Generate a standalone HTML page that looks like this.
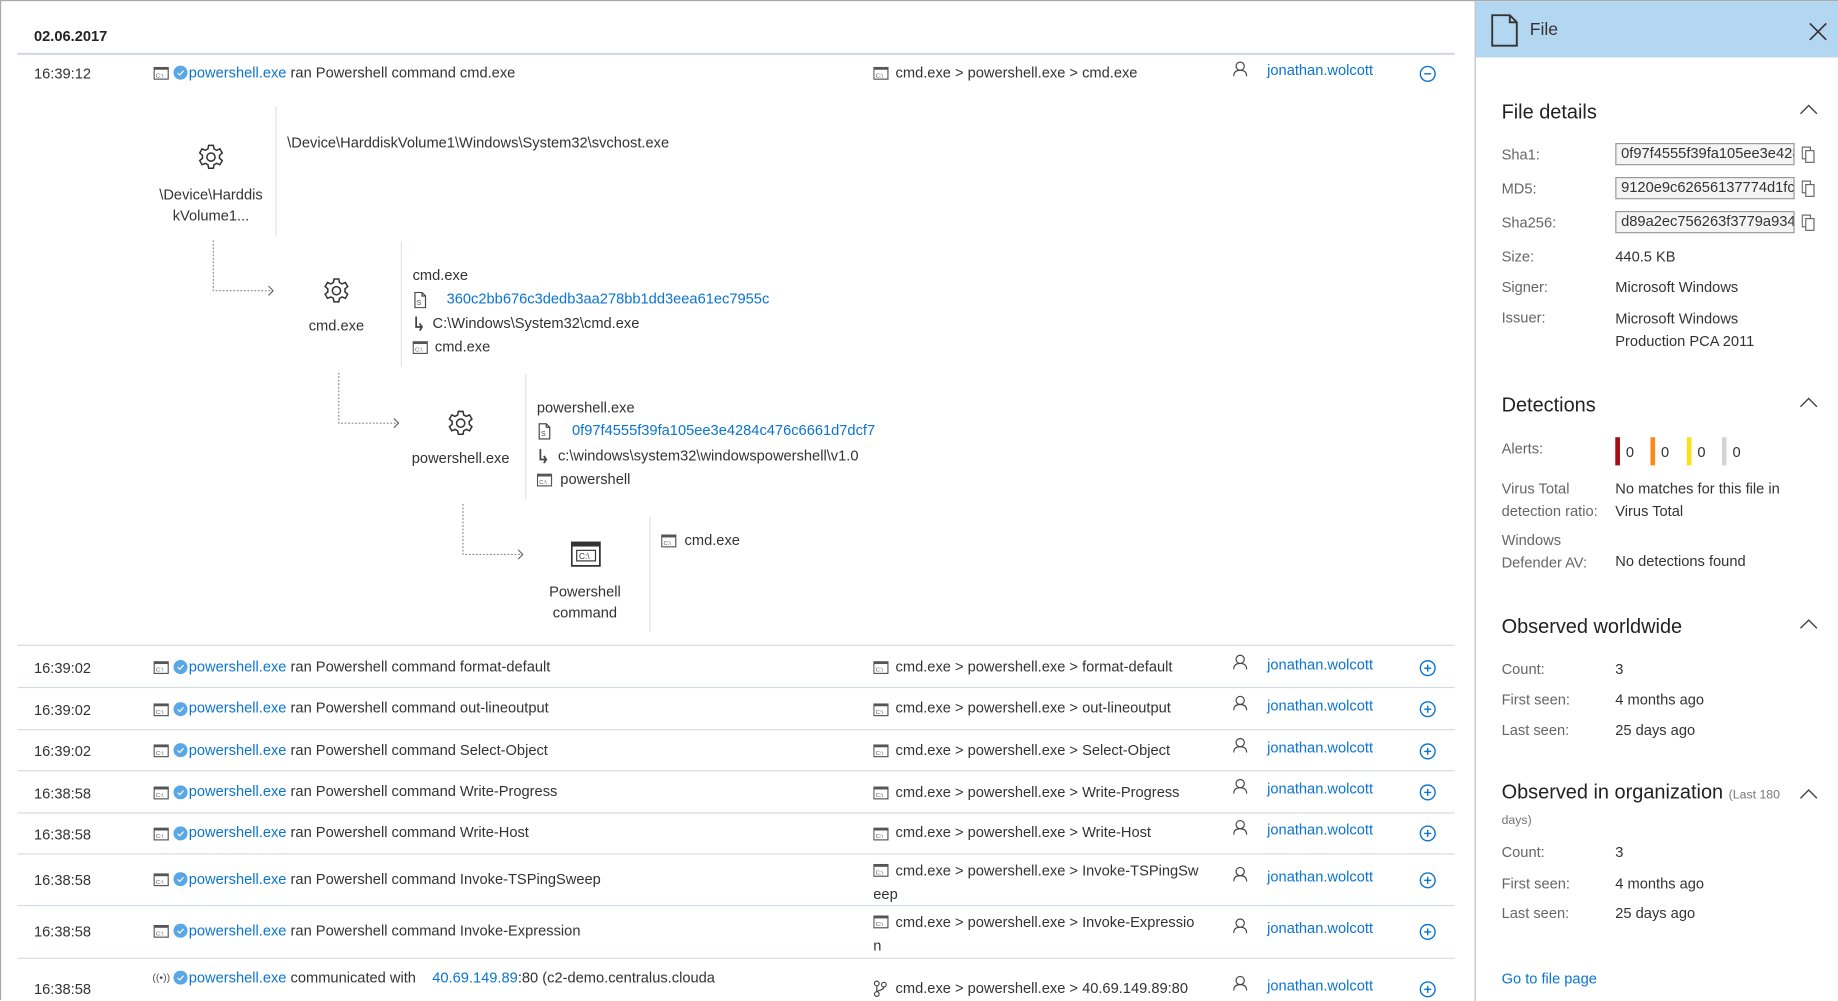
<!DOCTYPE html>
<html><head><meta charset="utf-8"><style>
html,body{margin:0;padding:0;background:#fff;overflow:hidden}
#w{position:absolute;left:0;top:0;width:1568px;height:853px;transform:scale(1.17219);transform-origin:0 0;font-family:"Segoe UI","Liberation Sans",sans-serif;font-size:12.5px;color:#333;border-top:1px solid #aaa;border-left:1px solid #aaa;box-sizing:border-box}
.a{position:absolute;white-space:nowrap;line-height:16px}
.l{color:#0a74d0}
.hl{position:absolute;left:14px;width:1226px;height:1px;background:#d4dae2}
.vl{position:absolute;width:1px;background:#dde2e8}
.g{color:#666}
.h{position:absolute;font-size:17px;color:#222;white-space:nowrap}
.inp{position:absolute;left:1377px;width:153px;height:19px;border:1px solid #999;background:#f4f4f4;box-sizing:border-box;font-size:12.5px;line-height:17px;padding-left:4px;overflow:hidden;white-space:nowrap;color:#333}
.bar{position:absolute;width:4px;height:24px;top:372px}
svg{position:absolute}
</style></head><body><div id="w">
<svg width="0" height="0"><defs>
<g id="cmd"><rect x="0.5" y="0.5" width="12" height="10" fill="none" stroke="#555"/><rect x="0.5" y="0.5" width="12" height="2" fill="#555"/><text x="2" y="9" font-size="5" fill="#555" font-family="Liberation Sans">C:\</text></g>
<g id="chk"><circle cx="6" cy="6" r="6" fill="#5aa7e6"/><path d="M3.5 6.2l1.8 1.8 3.3-3.6" stroke="#fff" fill="none" stroke-width="1"/></g>
<g id="usr"><circle cx="6" cy="4.5" r="3.5" fill="none" stroke="#444"/><path d="M0.5 13c0-4 2.5-5 5.5-5s5.5 1 5.5 5" fill="none" stroke="#444"/></g>
<g id="pls"><circle cx="7" cy="7" r="6.3" fill="none" stroke="#0a74d0" stroke-width="1.2"/><path d="M4 7h6M7 4v6" stroke="#0a74d0" stroke-width="1.2"/></g>
<g id="gear"><circle cx="12" cy="12" r="3.5" fill="none" stroke="#333" stroke-width="1.3"/><path d="M10 2h4l.6 3 2.2 1.2 2.8-1.2 2 3.5-2.3 2 0 2.5 2.3 2-2 3.5-2.8-1.2-2.2 1.2-.6 3h-4l-.6-3-2.2-1.2-2.8 1.2-2-3.5 2.3-2 0-2.5-2.3-2 2-3.5 2.8 1.2 2.2-1.2z" fill="none" stroke="#333" stroke-width="1.3"/></g>
<g id="fic"><path d="M1 .5h6l3 3v10H1z M7 .5v3h3" fill="none" stroke="#444"/><text x="2.5" y="11" font-size="6" fill="#444" font-family="Liberation Sans">S</text></g>
<g id="fol"><path d="M2 0v9h4M5 6l2 3-2 3" fill="none" stroke="#444" stroke-width="1.5"/></g>
<g id="cpy"><rect x="0.5" y="0.5" width="7" height="10" fill="#fff" stroke="#666"/><rect x="3.5" y="3.5" width="7" height="10" fill="#fff" stroke="#666"/></g>
</defs></svg>

<div class="a" style="left:28px;top:22px;font-weight:bold;color:#222">02.06.2017</div>
<div class="hl" style="top:44px;height:2px"></div>

<!-- first row -->
<div class="a" style="left:28px;top:54px">16:39:12</div>
<svg style="left:130px;top:56px" width="14" height="12"><use href="#cmd"/></svg>
<svg style="left:147px;top:55px" width="12" height="12"><use href="#chk"/></svg>
<div class="a" style="left:160px;top:53px"><span class="l">powershell.exe</span> ran Powershell command cmd.exe</div>
<svg style="left:744px;top:56px" width="14" height="12"><use href="#cmd"/></svg>
<div class="a" style="left:763px;top:53px">cmd.exe &gt; powershell.exe &gt; cmd.exe</div>
<svg style="left:1051px;top:51px" width="13" height="14"><use href="#usr"/></svg>
<div class="a l" style="left:1080px;top:51px">jonathan.wolcott</div>
<svg style="left:1210px;top:55px" width="15" height="15"><circle cx="7" cy="7" r="6.3" fill="none" stroke="#0a74d0" stroke-width="1.2"/><path d="M4 7h6" stroke="#0a74d0" stroke-width="1.2"/></svg>

<!-- tree -->
<svg style="left:167px;top:121px" width="24" height="24"><use href="#gear"/></svg>
<div class="a" style="left:129px;top:156px;width:100px;text-align:center;line-height:18px">\Device\Harddis<br>kVolume1...</div>
<div class="vl" style="left:234px;top:90px;height:110px"></div>
<div class="a" style="left:244px;top:113px">\Device\HarddiskVolume1\Windows\System32\svchost.exe</div>
<svg style="left:178px;top:204px" width="60" height="50"><path d="M3 0v43h50" fill="none" stroke="#888" stroke-dasharray="1.5 1.5"/><path d="M50 39l4 4-4 4" fill="none" stroke="#666"/></svg>

<svg style="left:274px;top:235px" width="24" height="24"><use href="#gear"/></svg>
<div class="a" style="left:246px;top:269px;width:80px;text-align:center">cmd.exe</div>
<div class="vl" style="left:341px;top:205px;height:107px"></div>
<div class="a" style="left:351px;top:226px">cmd.exe</div>
<svg style="left:352px;top:248px" width="11" height="14"><use href="#fic"/></svg>
<div class="a l" style="left:380px;top:246px">360c2bb676c3dedb3aa278bb1dd3eea61ec7955c</div>
<svg style="left:352px;top:269px" width="10" height="13"><use href="#fol"/></svg>
<div class="a" style="left:368px;top:267px">C:\Windows\System32\cmd.exe</div>
<svg style="left:351px;top:290px" width="14" height="12"><use href="#cmd"/></svg>
<div class="a" style="left:370px;top:287px">cmd.exe</div>
<svg style="left:285px;top:317px" width="60" height="50"><path d="M3 0v43h50" fill="none" stroke="#888" stroke-dasharray="1.5 1.5"/><path d="M50 39l4 4-4 4" fill="none" stroke="#666"/></svg>

<svg style="left:380px;top:348px" width="24" height="24"><use href="#gear"/></svg>
<div class="a" style="left:342px;top:382px;width:100px;text-align:center">powershell.exe</div>
<div class="vl" style="left:447px;top:318px;height:107px"></div>
<div class="a" style="left:457px;top:339px">powershell.exe</div>
<svg style="left:458px;top:360px" width="11" height="14"><use href="#fic"/></svg>
<div class="a l" style="left:487px;top:358px">0f97f4555f39fa105ee3e4284c476c6661d7dcf7</div>
<svg style="left:458px;top:382px" width="10" height="13"><use href="#fol"/></svg>
<div class="a" style="left:475px;top:380px">c:\windows\system32\windowspowershell\v1.0</div>
<svg style="left:457px;top:403px" width="14" height="12"><use href="#cmd"/></svg>
<div class="a" style="left:477px;top:400px">powershell</div>
<svg style="left:391px;top:429px" width="60" height="50"><path d="M3 0v43h50" fill="none" stroke="#888" stroke-dasharray="1.5 1.5"/><path d="M50 39l4 4-4 4" fill="none" stroke="#666"/></svg>

<svg style="left:486px;top:461px" width="26" height="22"><rect x="0.75" y="0.75" width="24" height="20" fill="none" stroke="#333" stroke-width="1.5"/><rect x="0.75" y="0.75" width="24" height="3.5" fill="#333"/><rect x="5" y="7.5" width="16" height="9" fill="none" stroke="#333"/><text x="7" y="15" font-size="7" fill="#333" font-family="Liberation Sans">C:\</text></svg>
<div class="a" style="left:448px;top:495px;width:100px;text-align:center;line-height:18px">Powershell<br>command</div>
<div class="vl" style="left:553px;top:440px;height:98px"></div>
<svg style="left:563px;top:455px" width="14" height="12"><use href="#cmd"/></svg>
<div class="a" style="left:583px;top:452px">cmd.exe</div>

<!-- separators -->
<div class="hl" style="top:549px"></div>
<div class="hl" style="top:585px"></div>
<div class="hl" style="top:621px"></div>
<div class="hl" style="top:656px"></div>
<div class="hl" style="top:692px"></div>
<div class="hl" style="top:727px"></div>
<div class="hl" style="top:771px"></div>
<div class="hl" style="top:816px"></div>

<!-- rows -->
<div class="a" style="left:28px;top:561px">16:39:02</div>
<svg style="left:130px;top:563px" width="14" height="12"><use href="#cmd"/></svg><svg style="left:147px;top:562px" width="12" height="12"><use href="#chk"/></svg>
<div class="a" style="left:160px;top:560px"><span class="l">powershell.exe</span> ran Powershell command format-default</div>
<svg style="left:744px;top:563px" width="14" height="12"><use href="#cmd"/></svg><div class="a" style="left:763px;top:560px">cmd.exe &gt; powershell.exe &gt; format-default</div>
<svg style="left:1051px;top:557px" width="13" height="14"><use href="#usr"/></svg><div class="a l" style="left:1080px;top:558px">jonathan.wolcott</div>
<svg style="left:1210px;top:562px" width="15" height="15"><use href="#pls"/></svg>

<div class="a" style="left:28px;top:597px">16:39:02</div>
<svg style="left:130px;top:599px" width="14" height="12"><use href="#cmd"/></svg><svg style="left:147px;top:598px" width="12" height="12"><use href="#chk"/></svg>
<div class="a" style="left:160px;top:595px"><span class="l">powershell.exe</span> ran Powershell command out-lineoutput</div>
<svg style="left:744px;top:599px" width="14" height="12"><use href="#cmd"/></svg><div class="a" style="left:763px;top:595px">cmd.exe &gt; powershell.exe &gt; out-lineoutput</div>
<svg style="left:1051px;top:592px" width="13" height="14"><use href="#usr"/></svg><div class="a l" style="left:1080px;top:593px">jonathan.wolcott</div>
<svg style="left:1210px;top:597px" width="15" height="15"><use href="#pls"/></svg>

<div class="a" style="left:28px;top:632px">16:39:02</div>
<svg style="left:130px;top:634px" width="14" height="12"><use href="#cmd"/></svg><svg style="left:147px;top:633px" width="12" height="12"><use href="#chk"/></svg>
<div class="a" style="left:160px;top:631px"><span class="l">powershell.exe</span> ran Powershell command Select-Object</div>
<svg style="left:744px;top:634px" width="14" height="12"><use href="#cmd"/></svg><div class="a" style="left:763px;top:631px">cmd.exe &gt; powershell.exe &gt; Select-Object</div>
<svg style="left:1051px;top:628px" width="13" height="14"><use href="#usr"/></svg><div class="a l" style="left:1080px;top:629px">jonathan.wolcott</div>
<svg style="left:1210px;top:633px" width="15" height="15"><use href="#pls"/></svg>

<div class="a" style="left:28px;top:668px">16:38:58</div>
<svg style="left:130px;top:670px" width="14" height="12"><use href="#cmd"/></svg><svg style="left:147px;top:669px" width="12" height="12"><use href="#chk"/></svg>
<div class="a" style="left:160px;top:666px"><span class="l">powershell.exe</span> ran Powershell command Write-Progress</div>
<svg style="left:744px;top:670px" width="14" height="12"><use href="#cmd"/></svg><div class="a" style="left:763px;top:667px">cmd.exe &gt; powershell.exe &gt; Write-Progress</div>
<svg style="left:1051px;top:663px" width="13" height="14"><use href="#usr"/></svg><div class="a l" style="left:1080px;top:664px">jonathan.wolcott</div>
<svg style="left:1210px;top:668px" width="15" height="15"><use href="#pls"/></svg>

<div class="a" style="left:28px;top:703px">16:38:58</div>
<svg style="left:130px;top:705px" width="14" height="12"><use href="#cmd"/></svg><svg style="left:147px;top:704px" width="12" height="12"><use href="#chk"/></svg>
<div class="a" style="left:160px;top:701px"><span class="l">powershell.exe</span> ran Powershell command Write-Host</div>
<svg style="left:744px;top:705px" width="14" height="12"><use href="#cmd"/></svg><div class="a" style="left:763px;top:701px">cmd.exe &gt; powershell.exe &gt; Write-Host</div>
<svg style="left:1051px;top:698px" width="13" height="14"><use href="#usr"/></svg><div class="a l" style="left:1080px;top:699px">jonathan.wolcott</div>
<svg style="left:1210px;top:703px" width="15" height="15"><use href="#pls"/></svg>

<div class="a" style="left:28px;top:742px">16:38:58</div>
<svg style="left:130px;top:744px" width="14" height="12"><use href="#cmd"/></svg><svg style="left:147px;top:743px" width="12" height="12"><use href="#chk"/></svg>
<div class="a" style="left:160px;top:741px"><span class="l">powershell.exe</span> ran Powershell command Invoke-TSPingSweep</div>
<svg style="left:744px;top:736px" width="14" height="12"><use href="#cmd"/></svg><div class="a" style="left:744px;top:732px;line-height:20px"><span style="padding-left:19px">cmd.exe &gt; powershell.exe &gt; Invoke-TSPingSw</span><br>eep</div>
<svg style="left:1051px;top:738px" width="13" height="14"><use href="#usr"/></svg><div class="a l" style="left:1080px;top:739px">jonathan.wolcott</div>
<svg style="left:1210px;top:743px" width="15" height="15"><use href="#pls"/></svg>

<div class="a" style="left:28px;top:786px">16:38:58</div>
<svg style="left:130px;top:788px" width="14" height="12"><use href="#cmd"/></svg><svg style="left:147px;top:787px" width="12" height="12"><use href="#chk"/></svg>
<div class="a" style="left:160px;top:785px"><span class="l">powershell.exe</span> ran Powershell command Invoke-Expression</div>
<svg style="left:744px;top:780px" width="14" height="12"><use href="#cmd"/></svg><div class="a" style="left:744px;top:776px;line-height:20px"><span style="padding-left:19px">cmd.exe &gt; powershell.exe &gt; Invoke-Expressio</span><br>n</div>
<svg style="left:1051px;top:782px" width="13" height="14"><use href="#usr"/></svg><div class="a l" style="left:1080px;top:783px">jonathan.wolcott</div>
<svg style="left:1210px;top:787px" width="15" height="15"><use href="#pls"/></svg>

<div class="a" style="left:28px;top:835px">16:38:58</div>
<div class="a" style="left:129px;top:825px;font-size:9px;color:#555">((•))</div><svg style="left:147px;top:827px" width="12" height="12"><use href="#chk"/></svg>
<div class="a" style="left:160px;top:825px"><span class="l">powershell.exe</span> communicated with &nbsp;&nbsp;&nbsp;<span class="l">40.69.149.89</span>:80 (c2-demo.centralus.clouda</div>
<svg style="left:744px;top:835px" width="12" height="15"><circle cx="3" cy="3" r="2" fill="none" stroke="#444"/><circle cx="3" cy="12" r="2" fill="none" stroke="#444"/><circle cx="9" cy="4" r="2" fill="none" stroke="#444"/><path d="M3 5v5M9 6c0 3-6 3-6 4" fill="none" stroke="#444"/></svg>
<div class="a" style="left:763px;top:834px">cmd.exe &gt; powershell.exe &gt; 40.69.149.89:80</div>
<svg style="left:1051px;top:831px" width="13" height="14"><use href="#usr"/></svg><div class="a l" style="left:1080px;top:832px">jonathan.wolcott</div>
<svg style="left:1210px;top:836px" width="15" height="15"><use href="#pls"/></svg>

<!-- panel -->
<div style="position:absolute;left:1257px;top:0;width:311px;height:853px;border-left:1px solid #bbb;background:#fff"></div>
<div style="position:absolute;left:1258px;top:0;width:310px;height:48px;background:#b3d6f1"></div>
<svg style="left:1271px;top:11px" width="24" height="29"><path d="M1 1h15l6 6v20H1z M16 1v6h6" fill="none" stroke="#333" stroke-width="1.6"/></svg>
<div class="a" style="left:1304px;top:17px;font-size:15px;color:#333">File</div>
<svg style="left:1542px;top:18px" width="16" height="16"><path d="M1 1l14 14M15 1L1 15" stroke="#333" stroke-width="1.4"/></svg>

<div class="h" style="left:1280px;top:85px">File details</div>
<svg style="left:1534px;top:87px" width="16" height="10"><path d="M1 9l7-7 7 7" fill="none" stroke="#444" stroke-width="1.2"/></svg>
<div class="a g" style="left:1280px;top:123px">Sha1:</div><div class="inp" style="top:121px">0f97f4555f39fa105ee3e4284c476c6661d7dcf7</div><svg style="left:1536px;top:124px" width="12" height="15"><use href="#cpy"/></svg>
<div class="a g" style="left:1280px;top:152px">MD5:</div><div class="inp" style="top:150px">9120e9c62656137774d1fc0</div><svg style="left:1536px;top:153px" width="12" height="15"><use href="#cpy"/></svg>
<div class="a g" style="left:1280px;top:181px">Sha256:</div><div class="inp" style="top:179px">d89a2ec756263f3779a934a</div><svg style="left:1536px;top:182px" width="12" height="15"><use href="#cpy"/></svg>
<div class="a g" style="left:1280px;top:210px">Size:</div><div class="a" style="left:1377px;top:210px">440.5 KB</div>
<div class="a g" style="left:1280px;top:236px">Signer:</div><div class="a" style="left:1377px;top:236px">Microsoft Windows</div>
<div class="a g" style="left:1280px;top:262px">Issuer:</div><div class="a" style="left:1377px;top:262px;line-height:19px">Microsoft Windows<br>Production PCA 2011</div>

<div class="h" style="left:1280px;top:335px">Detections</div>
<svg style="left:1534px;top:337px" width="16" height="10"><path d="M1 9l7-7 7 7" fill="none" stroke="#444" stroke-width="1.2"/></svg>
<div class="a g" style="left:1280px;top:374px">Alerts:</div>
<div class="bar" style="left:1377px;background:#a50e14"></div><div class="a" style="left:1386px;top:377px">0</div>
<div class="bar" style="left:1407px;background:#f7891e"></div><div class="a" style="left:1416px;top:377px">0</div>
<div class="bar" style="left:1438px;background:#f9e21a"></div><div class="a" style="left:1447px;top:377px">0</div>
<div class="bar" style="left:1468px;background:#d4d4d4"></div><div class="a" style="left:1477px;top:377px">0</div>
<div class="a g" style="left:1280px;top:407px;line-height:19px">Virus Total<br>detection ratio:</div>
<div class="a" style="left:1377px;top:407px;line-height:19px">No matches for this file in<br>Virus Total</div>
<div class="a g" style="left:1280px;top:451px;line-height:19px">Windows<br>Defender AV:</div>
<div class="a" style="left:1377px;top:470px">No detections found</div>

<div class="h" style="left:1280px;top:524px">Observed worldwide</div>
<svg style="left:1534px;top:526px" width="16" height="10"><path d="M1 9l7-7 7 7" fill="none" stroke="#444" stroke-width="1.2"/></svg>
<div class="a g" style="left:1280px;top:562px">Count:</div><div class="a" style="left:1377px;top:562px">3</div>
<div class="a g" style="left:1280px;top:588px">First seen:</div><div class="a" style="left:1377px;top:588px">4 months ago</div>
<div class="a g" style="left:1280px;top:614px">Last seen:</div><div class="a" style="left:1377px;top:614px">25 days ago</div>

<div class="h" style="left:1280px;top:665px">Observed in organization <span style="font-size:10.5px;color:#777">(Last 180</span></div>
<div class="a" style="left:1280px;top:691px;font-size:10.5px;color:#777">days)</div>
<svg style="left:1534px;top:671px" width="16" height="10"><path d="M1 9l7-7 7 7" fill="none" stroke="#444" stroke-width="1.2"/></svg>
<div class="a g" style="left:1280px;top:718px">Count:</div><div class="a" style="left:1377px;top:718px">3</div>
<div class="a g" style="left:1280px;top:745px">First seen:</div><div class="a" style="left:1377px;top:745px">4 months ago</div>
<div class="a g" style="left:1280px;top:770px">Last seen:</div><div class="a" style="left:1377px;top:770px">25 days ago</div>
<div class="a l" style="left:1280px;top:826px">Go to file page</div>
</div></body></html>
